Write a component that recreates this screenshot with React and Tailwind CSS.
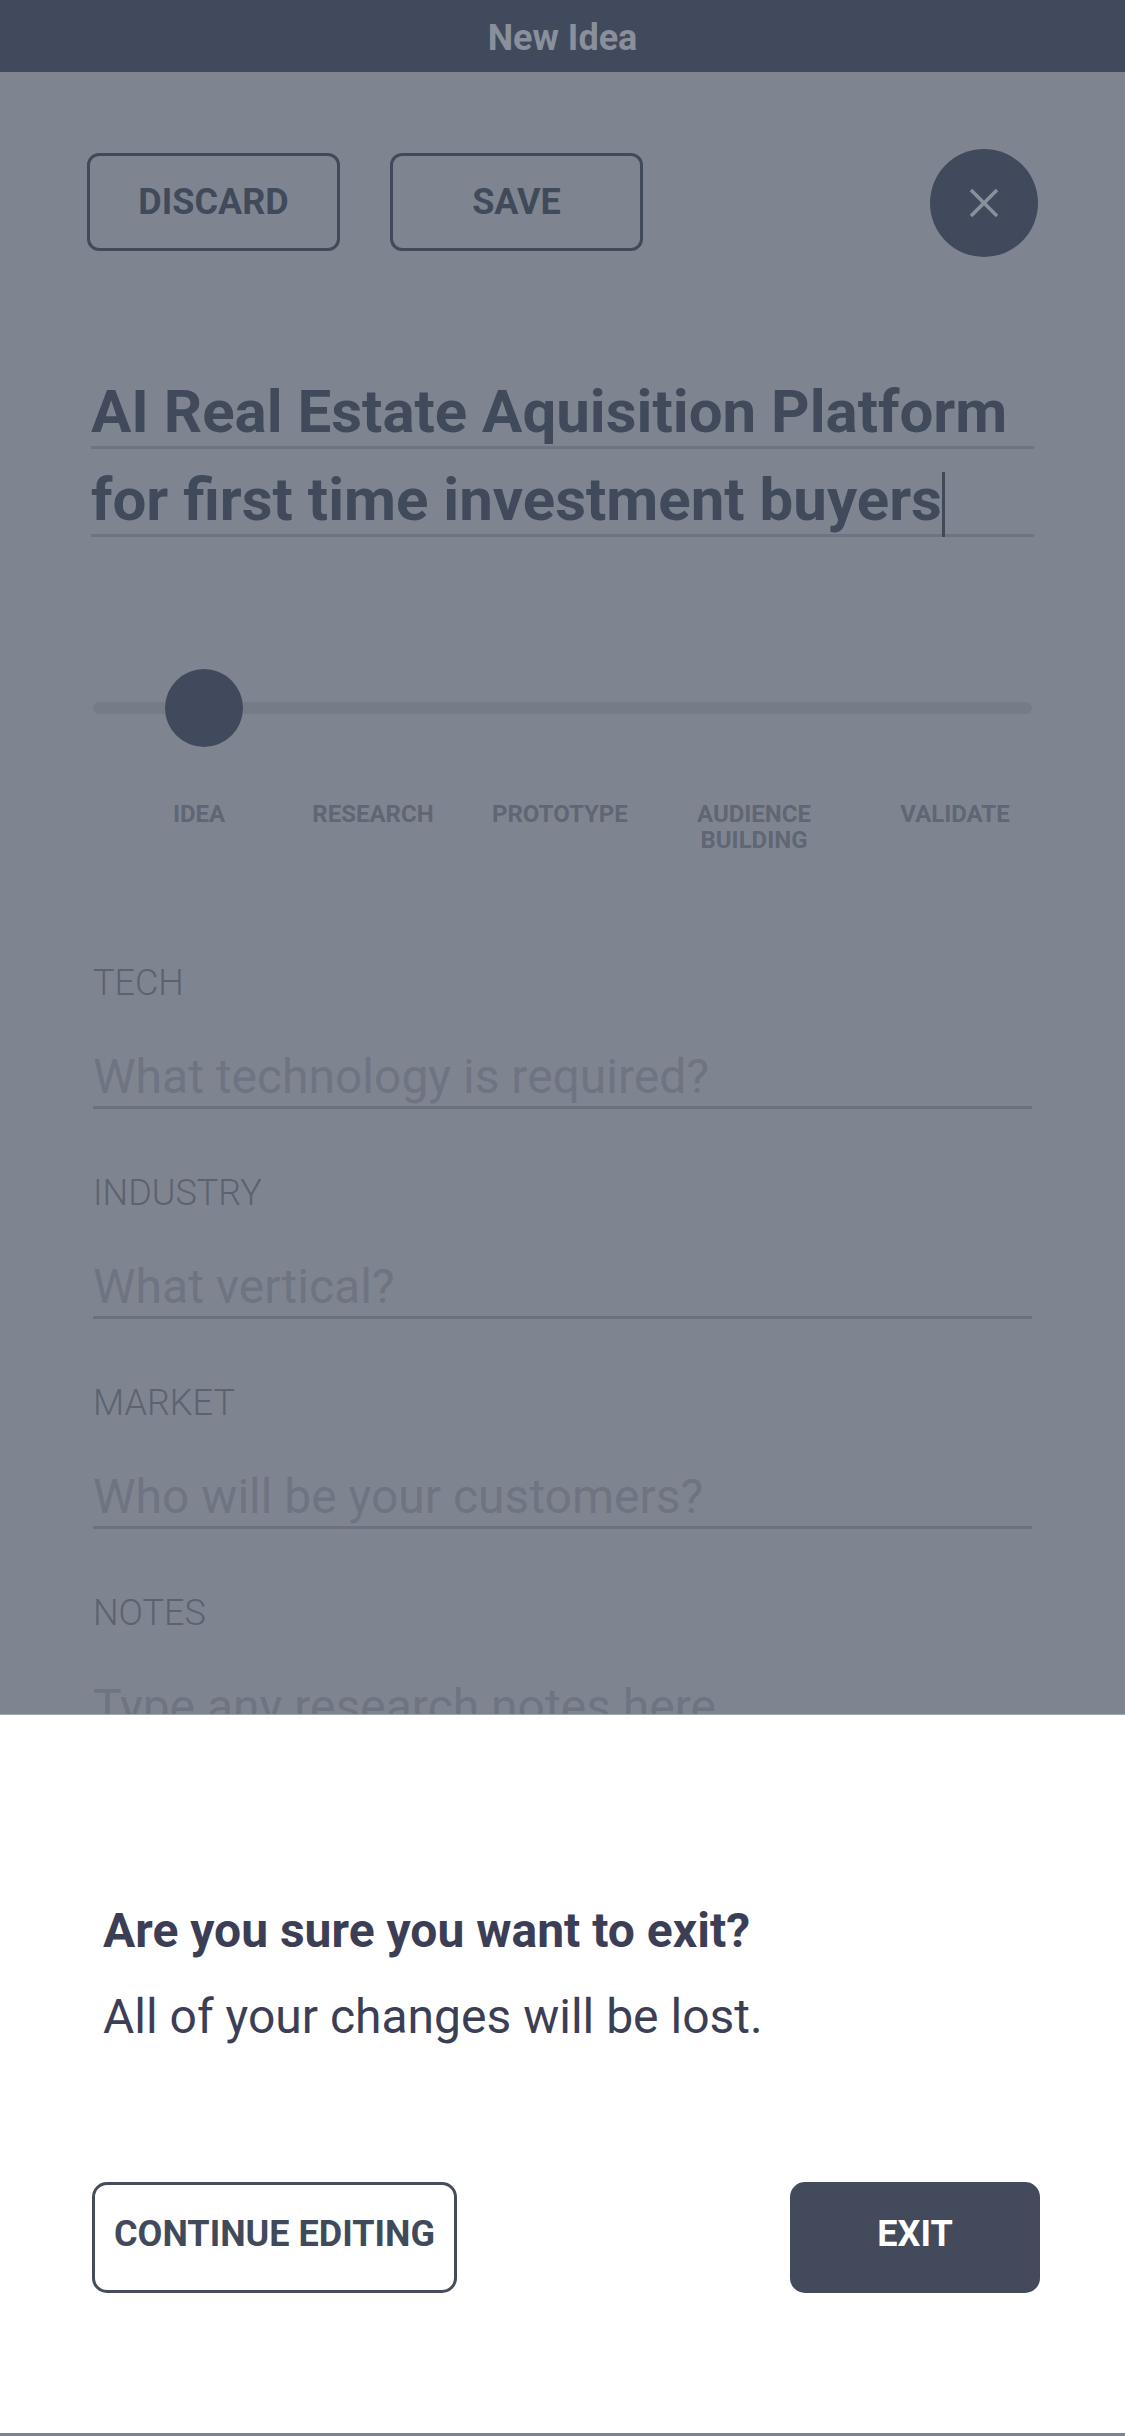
import React from "react";

const steps = [
    { label: "IDEA", w: "w-[110px]" },
    { label: "RESEARCH", w: "w-[238px]" },
    { label: "PROTOTYPE", w: "w-[134px]" },
    { label: "AUDIENCE BUILDING", w: "w-[256px]" },
    { label: "VALIDATE", w: "w-[146px]" },
];

const fields = [
    { label: "TECH", placeholder: "What technology is required?" },
    { label: "INDUSTRY", placeholder: "What vertical?" },
    { label: "MARKET", placeholder: "Who will be your customers?" },
    { label: "NOTES", placeholder: "Type any research notes here" },
];

function CloseIcon() {
    return (
        <svg width="30" height="28" viewBox="0 0 30 28" fill="none">
            <line x1="2" y1="1" x2="28" y2="27" stroke="#8a909b" strokeWidth="3.5" />
            <line x1="28" y1="1" x2="2" y2="27" stroke="#8a909b" strokeWidth="3.5" />
        </svg>
    );
}

export default function App() {
    return (
        <div
            className="relative w-[1125px] h-[2436px] overflow-hidden bg-[#7f8590]"
            style={{ fontFamily: "Roboto, 'Noto Sans', sans-serif" }}
        >
            {/* HEADER */}
            <div className="h-[72px] bg-[#414a5c] flex items-center justify-center pt-[4px]">
                <span className="text-[36px] font-bold text-[#8a909b] leading-none">New Idea</span>
            </div>

            {/* ACTIONS */}
            <div className="flex items-center px-[87px] mt-[77px]">
                <button className="w-[253px] h-[98px] mb-[3px] border-[3px] border-[#414a5b] rounded-[12px] text-[36px] font-bold text-[#414a5b]">
                    DISCARD
                </button>
                <button className="w-[253px] h-[98px] mb-[3px] ml-[50px] border-[3px] border-[#414a5b] rounded-[12px] text-[36px] font-bold text-[#414a5b]">
                    SAVE
                </button>
                <button className="ml-auto w-[108px] h-[108px] rounded-full bg-[#414a5c] flex items-center justify-center">
                    <CloseIcon />
                </button>
            </div>

            {/* TITLE */}
            <div className="mt-[120px] pl-[91px] pr-[91px] text-[60px] font-bold text-[#414a5b]">
                <div className="h-[72px] leading-[69px] border-b-[3px] border-[#6e7480] whitespace-nowrap">
                    AI Real Estate Aquisition Platform
                </div>
                <div className="mt-[16px] h-[72px] leading-[69px] border-b-[3px] border-[#6e7480] whitespace-nowrap">
                    for first time investment buyers
                    <span className="inline-block w-[3px] h-[65px] align-[-17px] bg-[#414a5b]" />
                </div>
            </div>

            {/* STAGE SLIDER */}
            <div className="relative mt-[132px] mx-[93px] h-[78px] flex items-center">
                <div className="w-full h-[12px] rounded-full bg-[#757b87]" />
                <div className="absolute left-[72px] top-0 w-[78px] h-[78px] rounded-full bg-[#414a5c]" />
            </div>

            <div className="flex pl-[144px] mt-[54px]">
                {steps.map((s) => (
                    <div
                        key={s.label}
                        className={`${s.w} text-center text-[24px] leading-[26px] font-bold text-[#5f6674]`}
                    >
                        {s.label === "AUDIENCE BUILDING" ? (
                            <>
                                AUDIENCE
                                <br />
                                BUILDING
                            </>
                        ) : (
                            s.label
                        )}
                    </div>
                ))}
            </div>

            {/* FIELDS */}
            <div className="mt-[109px] px-[93px] flex flex-col gap-[63px]">
                {fields.map((f) => (
                    <div key={f.label}>
                        <div className="text-[36px] leading-[42px] font-light text-[#5c6270]">{f.label}</div>
                        <div className="mt-[45px] pb-[1px] border-b-[3px] border-[#6b717e] text-[48px] leading-[56px] text-[#6e7482] whitespace-nowrap">
                            {f.placeholder}
                        </div>
                    </div>
                ))}
            </div>

            {/* CONFIRM SHEET */}
            <div className="absolute left-0 right-0 top-[1714px] h-[719px] bg-white border-t border-[#a3a7ae]">
                <div className="pt-[188px] px-[103px] text-[#3b3e55]">
                    <h2 className="text-[48px] leading-[56px] font-bold">Are you sure you want to exit?</h2>
                    <p className="mt-[30px] text-[48px] leading-[56px]">All of your changes will be lost.</p>
                </div>
                <div className="mt-[137px] flex justify-between pl-[92px] pr-[85px]">
                    <button className="w-[365px] h-[111px] pb-[7px] border-[3px] border-[#454c5c] rounded-[15px] text-[36px] font-bold text-[#414a5b]">
                        CONTINUE EDITING
                    </button>
                    <button className="w-[250px] h-[111px] pb-[7px] rounded-[15px] bg-[#424a5b] text-[36px] font-bold text-white">
                        EXIT
                    </button>
                </div>
            </div>
        </div>
    );
}
